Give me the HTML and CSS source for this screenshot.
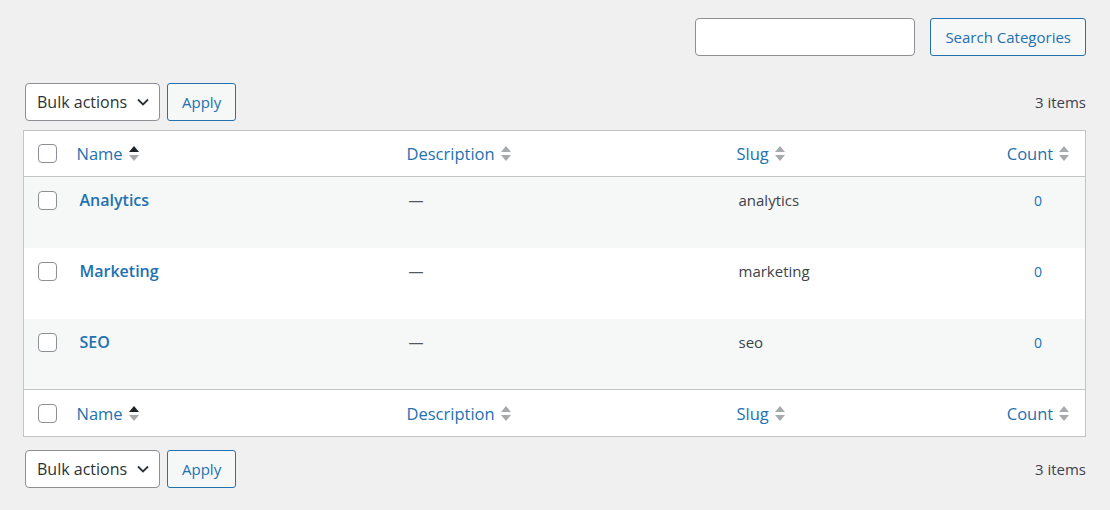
FILE: index.html
```html
<!DOCTYPE html>
<html>
<head>
    <meta charset="UTF-8">
    <link rel="stylesheet" href="styles.css">
</head>
<body>
    <div class="search-box">
        <input type="search" class="search-input">
        <button class="button">Search Categories</button>
    </div>

    <div class="tablenav top">
        <div class="actions">
            <div class="bulk-select">
                <span>Bulk actions</span>
                <svg width="14" height="10" viewBox="0 0 14 10"><path d="M2 2.5 L7 7.5 L12 2.5" fill="none" stroke="#2c3338" stroke-width="1.8"/></svg>
            </div>
            <button class="button">Apply</button>
        </div>
        <span class="count-items">3 items</span>
    </div>

    <table class="list-table">
        <thead>
            <tr>
                <th class="col-cb"><span class="checkbox"></span></th>
                <th class="col-name"><a>Name <svg class="sort" width="10" height="17" viewBox="0 0 10 17"><path d="M0 7 L5 1 L10 7 Z" fill="#1d2327"/><path d="M0 10 L5 16 L10 10 Z" fill="#a7aaad"/></svg></a></th>
                <th class="col-desc"><a>Description <svg class="sort" width="10" height="17" viewBox="0 0 10 17"><path d="M0 7 L5 1 L10 7 Z" fill="#a7aaad"/><path d="M0 10 L5 16 L10 10 Z" fill="#a7aaad"/></svg></a></th>
                <th class="col-slug"><a>Slug <svg class="sort" width="10" height="17" viewBox="0 0 10 17"><path d="M0 7 L5 1 L10 7 Z" fill="#a7aaad"/><path d="M0 10 L5 16 L10 10 Z" fill="#a7aaad"/></svg></a></th>
                <th class="col-count"><a>Count <svg class="sort" width="10" height="17" viewBox="0 0 10 17"><path d="M0 7 L5 1 L10 7 Z" fill="#a7aaad"/><path d="M0 10 L5 16 L10 10 Z" fill="#a7aaad"/></svg></a></th>
            </tr>
        </thead>
        <tbody>
            <tr class="alt">
                <td class="col-cb"><span class="checkbox"></span></td>
                <td class="col-name"><a class="row-title">Analytics</a></td>
                <td class="col-desc">—</td>
                <td class="col-slug">analytics</td>
                <td class="col-count"><a>0</a></td>
            </tr>
            <tr>
                <td class="col-cb"><span class="checkbox"></span></td>
                <td class="col-name"><a class="row-title">Marketing</a></td>
                <td class="col-desc">—</td>
                <td class="col-slug">marketing</td>
                <td class="col-count"><a>0</a></td>
            </tr>
            <tr class="alt">
                <td class="col-cb"><span class="checkbox"></span></td>
                <td class="col-name"><a class="row-title">SEO</a></td>
                <td class="col-desc">—</td>
                <td class="col-slug">seo</td>
                <td class="col-count"><a>0</a></td>
            </tr>
        </tbody>
        <tfoot>
            <tr>
                <th class="col-cb"><span class="checkbox"></span></th>
                <th class="col-name"><a>Name <svg class="sort" width="10" height="17" viewBox="0 0 10 17"><path d="M0 7 L5 1 L10 7 Z" fill="#1d2327"/><path d="M0 10 L5 16 L10 10 Z" fill="#a7aaad"/></svg></a></th>
                <th class="col-desc"><a>Description <svg class="sort" width="10" height="17" viewBox="0 0 10 17"><path d="M0 7 L5 1 L10 7 Z" fill="#a7aaad"/><path d="M0 10 L5 16 L10 10 Z" fill="#a7aaad"/></svg></a></th>
                <th class="col-slug"><a>Slug <svg class="sort" width="10" height="17" viewBox="0 0 10 17"><path d="M0 7 L5 1 L10 7 Z" fill="#a7aaad"/><path d="M0 10 L5 16 L10 10 Z" fill="#a7aaad"/></svg></a></th>
                <th class="col-count"><a>Count <svg class="sort" width="10" height="17" viewBox="0 0 10 17"><path d="M0 7 L5 1 L10 7 Z" fill="#a7aaad"/><path d="M0 10 L5 16 L10 10 Z" fill="#a7aaad"/></svg></a></th>
            </tr>
        </tfoot>
    </table>

    <div class="tablenav bottom">
        <div class="actions">
            <div class="bulk-select">
                <span>Bulk actions</span>
                <svg width="14" height="10" viewBox="0 0 14 10"><path d="M2 2.5 L7 7.5 L12 2.5" fill="none" stroke="#2c3338" stroke-width="1.8"/></svg>
            </div>
            <button class="button">Apply</button>
        </div>
        <span class="count-items">3 items</span>
    </div>
</body>
</html>
```

FILE: styles.css
```css
body {
    margin: 0;
    padding: 18px 24px 0 23px;
    background: #f0f0f1;
    font-family: "Open Sans", "Noto Sans", sans-serif;
    color: #3c434a;
    font-size: 15px;
}

.search-box {
    display: flex;
    justify-content: flex-end;
    gap: 15px;
}
.search-input {
    box-sizing: border-box;
    width: 220px;
    height: 38px;
    margin: 0;
    border: 1px solid #8c8f94;
    border-radius: 4px;
    background: #fff;
}
.button {
    box-sizing: border-box;
    height: 38px;
    padding: 0 14px;
    margin: 0;
    border: 1px solid #2271b1;
    border-radius: 3px;
    background: #f6f7f7;
    color: #2271b1;
    font-family: inherit;
    font-size: 15px;
}

.tablenav {
    display: flex;
    justify-content: space-between;
    align-items: center;
    height: 38px;
}
.tablenav.top {
    margin-top: 27px;
}
.tablenav.bottom {
    margin-top: 13px;
}
.actions {
    display: flex;
    gap: 7px;
    margin-left: 2px;
}
.bulk-select {
    box-sizing: border-box;
    width: 135px;
    height: 38px;
    display: flex;
    align-items: center;
    justify-content: space-between;
    padding: 0 9px 0 11px;
    border: 1px solid #8c8f94;
    border-radius: 4px;
    background: #fff;
    color: #2c3338;
    font-size: 16px;
}
.count-items {
    color: #3c434a;
    font-size: 15px;
}

.list-table {
    width: 100%;
    margin-top: 9px;
    border-collapse: collapse;
    border: 1px solid #c3c4c7;
    background: #fff;
    table-layout: fixed;
}
.list-table th,
.list-table td {
    text-align: left;
    font-weight: normal;
    vertical-align: top;
}
.list-table thead th {
    height: 45px;
    vertical-align: middle;
    border-bottom: 1px solid #c3c4c7;
    padding: 0 0 0 10px;
}
.list-table tfoot th {
    height: 46px;
    vertical-align: middle;
    border-top: 1px solid #c3c4c7;
    padding: 0 0 0 10px;
}
.list-table th a {
    display: inline-flex;
    align-items: center;
    gap: 6px;
    color: #2271b1;
    font-size: 16.5px;
}
.list-table td {
    height: 71px;
    box-sizing: border-box;
    padding: 12px 0 0 12px;
    line-height: 22px;
}
.list-table tr.alt td {
    background: #f6f7f7;
}
.list-table .col-cb {
    width: 43px;
    padding: 0 0 0 14px;
    box-sizing: border-box;
}
.list-table td.col-cb {
    padding-top: 14px;
}
.list-table .col-name,
.list-table .col-desc {
    width: 320px;
}
.list-table td.col-name {
    padding-left: 13px;
}
.col-desc {
    color: #50575e;
}
.list-table .col-count {
    width: 94px;
    text-align: center;
    padding-left: 0;
}
.list-table td.col-count a {
    color: #2271b1;
    font-size: 14px;
}
.list-table td.col-slug {
    font-size: 15px;
}
.row-title {
    color: #2271b1;
    font-weight: 600;
    font-size: 16px;
}
.checkbox {
    display: block;
    box-sizing: border-box;
    width: 19px;
    height: 19px;
    border: 1px solid #8c8f94;
    border-radius: 4px;
    background: #fff;
}
```
